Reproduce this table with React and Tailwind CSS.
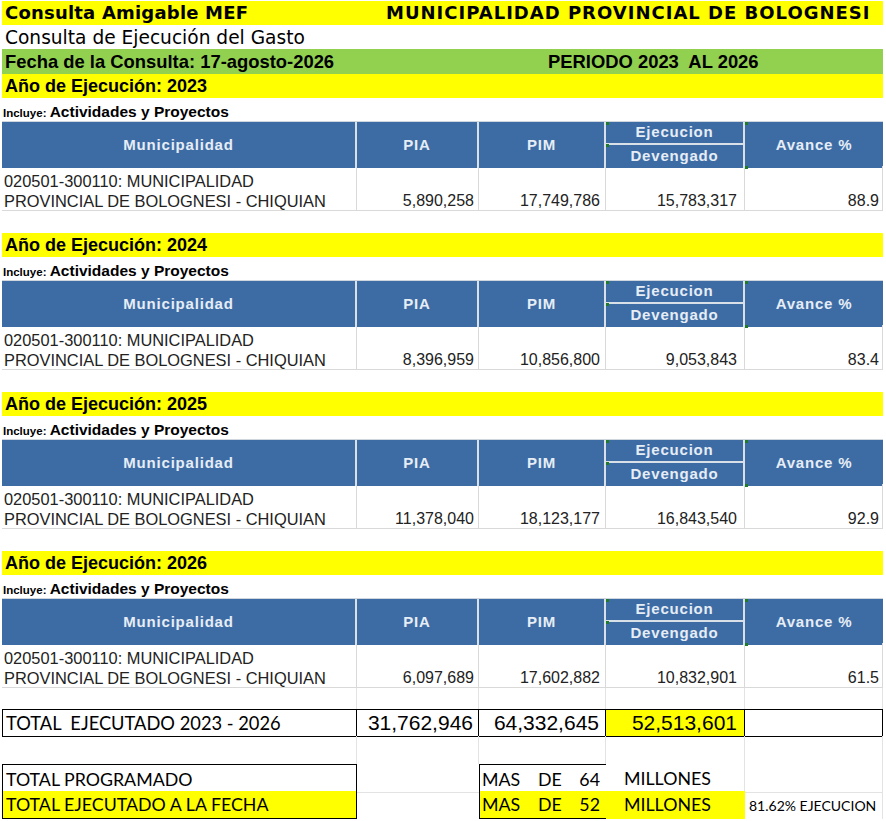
import React from "react";

const COLS = "grid grid-cols-[355px_122px_127px_139px_138px]";
const arial = "font-['Liberation_Sans',Arial,sans-serif]";
const verdana = "font-['DejaVu_Sans',Verdana,sans-serif]";
const calibri = "font-['Lato',Calibri,sans-serif]";

const years = [
  { year: 2023, pia: "5,890,258", pim: "17,749,786", dev: "15,783,317", avance: "88.9" },
  { year: 2024, pia: "8,396,959", pim: "10,856,800", dev: "9,053,843", avance: "83.4" },
  { year: 2025, pia: "11,378,040", pim: "18,123,177", dev: "16,843,540", avance: "92.9" },
  { year: 2026, pia: "6,097,689", pim: "17,602,882", dev: "10,832,901", avance: "61.5" },
];

// little green excel markers
function Marker({ className }) {
  return <span className={`absolute w-[3px] h-[3px] bg-[#1f7a2a] ${className}`}></span>;
}

function HeaderCell({ children }) {
  return (
    <div className="bg-[#3d6ca5] border-r-2 border-[#d9e0e8] flex items-center justify-center text-[15px] font-bold tracking-[0.8px] text-[#e6edf5]">
      {children}
    </div>
  );
}

function Section({ data, first }) {
  return (
    <section className={first ? "" : "mt-[22px]"}>
      <div className="h-[24px] bg-[#ffff00] pl-[3px] text-[18px] font-bold leading-[24px] text-black">
        Año de Ejecución: {data.year}
      </div>
      <div className="h-[23px] pt-[6px] pl-[1px] leading-[15px] text-black">
        <span className="text-[11.5px] font-bold">Incluye: </span>
        <span className="text-[15.5px] font-bold">Actividades y Proyectos</span>
      </div>

      {/* table header */}
      <div className={`${COLS} h-[45px] border-t border-[#cfd6de]`}>
        <HeaderCell>Municipalidad</HeaderCell>
        <HeaderCell>PIA</HeaderCell>
        <HeaderCell>PIM</HeaderCell>
        <div className="relative flex flex-col border-r-2 border-[#d9e0e8] text-[15px] font-bold tracking-[0.8px] text-[#e6edf5]">
          <div className="h-[21px] bg-[#3d6ca5] flex items-center justify-center">Ejecucion</div>
          <div className="h-[2px] bg-[#d9e0e8]"></div>
          <div className="flex-1 bg-[#3d6ca5] flex items-center justify-center">Devengado</div>
          <Marker className="left-0 top-0" />
          <Marker className="left-0 top-[22px]" />
        </div>
        <div className="relative bg-[#3d6ca5] flex items-center justify-center text-[15px] font-bold tracking-[0.8px] text-[#e6edf5]">
          Avance %
          <Marker className="left-0 top-0" />
        </div>
      </div>

      {/* data row */}
      <div className={`${COLS} h-[45px] border-b border-[#d9d9d9] text-[16px] leading-[20px] text-[#222]`}>
        <div className="pt-[5px] pl-[2px] text-[16.4px] border-r border-[#d9d9d9]">
          <div>020501-300110: MUNICIPALIDAD</div>
          <div>PROVINCIAL DE BOLOGNESI - CHIQUIAN</div>
        </div>
        <div className="pt-[25px] pr-[4px] text-right border-r border-[#d9d9d9]">{data.pia}</div>
        <div className="pt-[25px] pr-[5px] text-right border-r border-[#d9d9d9]">{data.pim}</div>
        <div className="pt-[25px] pr-[7px] text-right border-r border-[#d9d9d9]">{data.dev}</div>
        <div className="relative pt-[25px] pr-[3px] text-right border-r border-[#d9d9d9]">
          {data.avance}
          <Marker className="left-0 top-0" />
        </div>
      </div>
    </section>
  );
}

function EmptyRow({ h }) {
  return (
    <div className={`${COLS} ${h}`}>
      <div className="border-r border-[#e3e3e3]"></div>
      <div className="border-r border-[#e3e3e3]"></div>
      <div className="border-r border-[#e3e3e3]"></div>
      <div className="border-r border-[#e3e3e3]"></div>
      <div className="border-r border-[#e3e3e3]"></div>
    </div>
  );
}

export default function App() {
  return (
    <div className={`w-[886px] h-[821px] overflow-hidden bg-white pl-[2px] pt-[1px] ${arial}`}>
      <div className="w-[881px]">
        {/* title */}
        <div className={`h-[24px] bg-[#ffff00] flex items-center text-[18px] font-bold leading-[24px] text-black ${verdana}`}>
          <span className="w-[384px] pl-[3px] tracking-[0.2px]">Consulta Amigable MEF</span>
          <span className="tracking-[1px]">MUNICIPALIDAD PROVINCIAL DE BOLOGNESI</span>
        </div>
        <div className={`h-[24px] pt-[1px] pl-[3px] text-[18.6px] leading-[24px] text-black ${verdana}`}>
          Consulta de Ejecución del Gasto
        </div>
        <div className="h-[25px] bg-[#92d050] flex pt-[1px] text-[18.4px] font-bold leading-[24px] text-black">
          <span className="w-[546px] pl-[3px]">Fecha de la Consulta: 17-agosto-2026</span>
          <span className="whitespace-pre">PERIODO 2023  AL 2026</span>
        </div>

        {years.map((y, i) => (
          <Section key={y.year} data={y} first={i === 0} />
        ))}

        <EmptyRow h="h-[21px]" />

        {/* total row */}
        <div className={`${COLS} h-[27px] text-black`}>
          <div className={`border border-black pl-[3px] text-[18.3px] leading-[26px] whitespace-pre ${calibri}`}>
            TOTAL  EJECUTADO 2023 - 2026
          </div>
          <div className="border-y border-r border-black pr-[5px] text-right text-[21px] leading-[26px]">31,762,946</div>
          <div className="border-y border-r border-black pr-[6px] text-right text-[21px] leading-[26px]">64,332,645</div>
          <div className="border-y border-r border-black bg-[#ffff00] pr-[7px] text-right text-[21px] leading-[26px]">52,513,601</div>
          <div className="border-y border-r border-black"></div>
        </div>

        <EmptyRow h="h-[28px]" />

        {/* summary */}
        <div className={`${COLS} h-[27px] text-black ${calibri} text-[17.8px] leading-[28px]`}>
          <div className="border-x border-t border-black pl-[3px]">TOTAL PROGRAMADO</div>
          <div className="border-b border-[#e3e3e3]"></div>
          <div className="border-l border-t border-black pl-[2px] grid grid-cols-[56px_40px_1fr]">
            <span>MAS</span>
            <span>DE</span>
            <span className="text-right pr-[6px]">64</span>
          </div>
          <div className="pl-[18px] border-r border-[#e3e3e3]">MILLONES</div>
          <div className="border-r border-b border-[#e3e3e3]"></div>
        </div>
        <div className={`${COLS} h-[27px] text-black ${calibri} text-[17.8px] leading-[27px]`}>
          <div className="border-x border-b border-black bg-[#ffff00] pl-[3px]">TOTAL EJECUTADO A LA FECHA</div>
          <div></div>
          <div className="border-l border-b border-black bg-[#ffff00] pl-[2px] grid grid-cols-[56px_40px_1fr]">
            <span>MAS</span>
            <span>DE</span>
            <span className="text-right pr-[6px]">52</span>
          </div>
          <div className="bg-[#ffff00] pl-[18px]">MILLONES</div>
          <div className="pl-[4px] pt-[5px] text-[14px] leading-[20px] border-r border-[#e3e3e3]">81.62% EJECUCION</div>
        </div>
      </div>
    </div>
  );
}
